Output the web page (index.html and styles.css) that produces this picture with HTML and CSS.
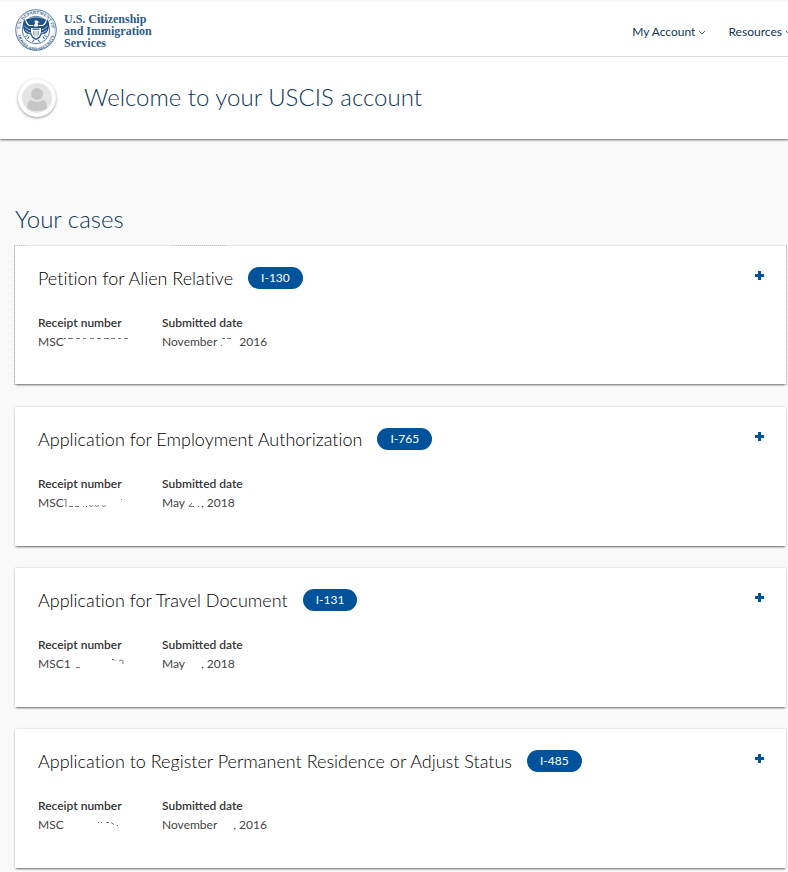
FILE: index.html
```html
<!DOCTYPE html>
<html lang="en">
<head>
    <meta charset="UTF-8">
    <meta name="viewport" content="width=device-width, initial-scale=1.0">
    <title>My Account | USCIS</title>
    <link rel="stylesheet" href="styles.css">
</head>
<body>
    <header class="topbar">
        <a class="brand" href="#">
            <svg class="seal" viewBox="0 0 84 84" aria-hidden="true">
                <defs>
                    <path id="seal-top" d="M11 50 A32 32 0 1 1 73 50"/>
                    <path id="seal-bottom" d="M5 46 A37 37 0 0 0 79 46"/>
                </defs>
                <circle cx="42" cy="42" r="40.500" fill="#fff" stroke="#51779d" stroke-width="2"/>
                <circle cx="42" cy="42" r="37.500" fill="none" stroke="#b9cadb" stroke-width="1"/>
                <circle cx="42" cy="42" r="27.500" fill="#f4f8fb" stroke="#5c80a4" stroke-width="2"/>
                <text class="seal-text"><textPath href="#seal-top" startOffset="50%" text-anchor="middle">U.S. DEPARTMENT OF</textPath></text>
                <text class="seal-text"><textPath href="#seal-bottom" startOffset="50%" text-anchor="middle">HOMELAND SECURITY</textPath></text>
                <path fill="#205387" d="M38 24 Q42 19 47 23 L51 25 L46 28 L48 34 L56 34 Q64 28 65 20 Q70 29 67 40 Q64 51 54 50 L49 58 L42 62 L35 58 L30 50 Q20 51 17 40 Q14 29 19 20 Q20 28 28 34 L36 34 L38 29 Z"/>
                <path fill="#205387" d="M27 20 Q42 13 57 20 L61 20 Q61 29 54 32 L30 32 Q23 29 23 20 Z"/>
                <path fill="#fff" d="M39 24 Q43 21 46 25 L49 26 L45 28 L47 34 Q42 37 37 34 L40 29 Z"/>
                <path fill="#fff" d="M32 38 H52 V45 Q51 55 42 59 Q33 55 32 45 Z"/>
                <path fill="#47719a" d="M35 39 H49 V42 H35 Z"/>
                <path fill="none" stroke="#6f90b0" stroke-width="1.500" d="M37 44 V52 M40 44 V55 M44 44 V55 M47 44 V52"/>
                <path fill="none" stroke="#e4edf5" stroke-width="1.500" d="M19 34 Q25 41 31 42 M20 42 Q26 47 32 48 M65 34 Q59 41 53 42 M64 42 Q58 47 52 48"/>
                <path fill="none" stroke="#205387" stroke-width="2" d="M25 52 L21 56 M28 55 L25 60 M59 52 L63 56 M56 55 L59 60 M38 61 L35 66 M46 61 L49 66"/>
            </svg>
            <span class="brand-name">U.S. Citizenship<br>and Immigration<br>Services</span>
        </a>
        <nav class="menu">
            <a href="#">My Account
                <svg class="chevron" viewBox="0 0 8 6" aria-hidden="true"><path d="M1 1 L4 4 L7 1"/></svg>
            </a>
            <a href="#">Resources
                <svg class="chevron" viewBox="0 0 8 6" aria-hidden="true"><path d="M1 1 L4 4 L7 1"/></svg>
            </a>
        </nav>
    </header>

    <section class="welcome">
        <div class="avatar">
            <svg viewBox="0 0 30 30" aria-hidden="true">
                <circle cx="15" cy="15" r="15" fill="#e4e4e4"/>
                <circle cx="15" cy="11" r="6" fill="#c6c6c6"/>
                <path fill="#c6c6c6" d="M5 25 Q5 18 9 17 Q15 21 21 17 Q25 18 25 25 Q21 28 15 28 Q9 28 5 25 Z"/>
            </svg>
        </div>
        <h1>Welcome to your USCIS account</h1>
    </section>

    <main class="cases">
        <h2>Your cases</h2>

        <article class="card card-focused">
            <div class="card-head">
                <h3>Petition for Alien Relative</h3>
                <span class="form-tag">I-130</span>
                <button class="expand" type="button" aria-label="Show details for I-130"></button>
            </div>
            <dl class="facts">
                <div>
                    <dt>Receipt number</dt>
                    <dd>MSC<svg class="hidden-number" viewBox="0 0 66 12" aria-hidden="true"><path d="M0 2.500 h2 M4 2.500 h5 M12 2.500 h4 M19 2.500 h3 M26 2.500 h4 M33 2.500 h4 M40 2.500 h5 M47 2.500 h4 M54 2.500 h3 M60 2.500 h4"/></svg></dd>
                </div>
                <div>
                    <dt>Submitted date</dt>
                    <dd>November<svg class="hidden-day" viewBox="0 0 22 12" aria-hidden="true"><path d="M5 2.500 h3 M10 2.500 h4 M4 9.500 h1"/></svg>2016</dd>
                </div>
            </dl>
        </article>

        <article class="card">
            <div class="card-head">
                <h3>Application for Employment Authorization</h3>
                <span class="form-tag">I-765</span>
                <button class="expand" type="button" aria-label="Show details for I-765"></button>
            </div>
            <dl class="facts">
                <div>
                    <dt>Receipt number</dt>
                    <dd>MSC<svg class="hidden-number" viewBox="0 0 66 12" aria-hidden="true"><path d="M0 3 L2 2 V10 M5 9.500 h4 M11 9.500 h4 M19 9.500 h1 M22 9.500 h1 M25 8.500 q2 2 4 0 M31 8.500 q2 2 4 0 M38 8.500 q2 2 4 0 M57 2.500 h1"/></svg></dd>
                </div>
                <div>
                    <dt>Submitted date</dt>
                    <dd>May<svg class="hidden-day-short" viewBox="0 0 16 12" aria-hidden="true"><path d="M7 6 L4 9.500 H9 M13 9.500 h1"/></svg>, 2018</dd>
                </div>
            </dl>
        </article>

        <article class="card">
            <div class="card-head">
                <h3>Application for Travel Document</h3>
                <span class="form-tag">I-131</span>
                <button class="expand" type="button" aria-label="Show details for I-131"></button>
            </div>
            <dl class="facts">
                <div>
                    <dt>Receipt number</dt>
                    <dd>MSC1<svg class="hidden-number" viewBox="0 0 66 12" aria-hidden="true"><path d="M5 9.500 h4 M41 1.500 h2 l1 1 M48 3 q2 -2 4 0 v3"/></svg></dd>
                </div>
                <div>
                    <dt>Submitted date</dt>
                    <dd>May<svg class="hidden-day-short" viewBox="0 0 16 12" aria-hidden="true"></svg>, 2018</dd>
                </div>
            </dl>
        </article>

        <article class="card">
            <div class="card-head">
                <h3>Application to Register Permanent Residence or Adjust Status</h3>
                <span class="form-tag">I-485</span>
                <button class="expand" type="button" aria-label="Show details for I-485"></button>
            </div>
            <dl class="facts">
                <div>
                    <dt>Receipt number</dt>
                    <dd>MSC<svg class="hidden-number" viewBox="0 0 66 12" aria-hidden="true"><path d="M34 3.500 h1 M37 3.500 h1 M42 3.500 h3 M47 3.500 l3 2 M53 6.500 h1"/></svg></dd>
                </div>
                <div>
                    <dt>Submitted date</dt>
                    <dd>November<svg class="hidden-day-short" viewBox="0 0 16 12" aria-hidden="true"></svg>, 2016</dd>
                </div>
            </dl>
        </article>
    </main>
</body>
</html>
```
FILE: styles.css
```css
* {
    box-sizing: border-box;
}
body {
    margin: 0;
    background: #f9f9f9;
    color: #333;
    font-family: Lato, "Open Sans", sans-serif;
    font-size: 12px;
}
h1, h2, h3, dl, dd {
    margin: 0;
}

/* Top bar */
.topbar {
    display: flex;
    align-items: center;
    justify-content: space-between;
    height: 57px;
    padding-left: 15px;
    overflow: hidden;
    background: #fff;
    border-top: 2px solid #f8f8f8;
    border-bottom: 1px solid #e6e6e6;
}
.brand {
    display: flex;
    align-items: center;
    gap: 7px;
    color: #2d5c8a;
    text-decoration: none;
}
.seal {
    width: 42px;
    height: 42px;
    margin-top: 2px;
}
.seal-text {
    fill: #3f698f;
    font-family: "Liberation Serif", serif;
    font-size: 9px;
    font-weight: bold;
}
.brand-name {
    margin-top: 4px;
    font-family: "Liberation Serif", serif;
    font-size: 12px;
    font-weight: bold;
    line-height: 12px;
}
.menu {
    display: flex;
    gap: 22px;
    margin-top: 6px;
    margin-right: -5px;
}
.menu a {
    color: #0f3557;
    font-size: 12px;
    line-height: 16px;
    text-decoration: none;
    white-space: nowrap;
}
.chevron {
    width: 8px;
    height: 6px;
    fill: none;
    stroke: #4a6a86;
}

/* Welcome band */
.welcome {
    position: relative;
    display: flex;
    align-items: center;
    gap: 28px;
    padding: 22px 18px;
    background: #fff;
    box-shadow: 0 1px 2px rgba(0, 0, 0, 0.6);
}
.avatar {
    width: 38px;
    height: 38px;
    padding: 4px;
    border-radius: 50%;
    background: #fff;
    box-shadow: 0 1px 3px rgba(0, 0, 0, 0.4);
}
.avatar svg {
    display: block;
}
h1, h2 {
    color: #0f3557;
    font-size: 24px;
    font-weight: 300;
    line-height: 30px;
}
h1 {
    padding-bottom: 2px;
}

/* Case list */
.cases {
    padding: 65px 2px 3px 15px;
}
h2 {
    margin-bottom: 12px;
}
.card {
    position: relative;
    padding: 21px 20px 34px 23px;
    margin-bottom: 22px;
    background: #fff;
    box-shadow: 0 2px 2px -1px rgba(0, 0, 0, 0.55), 0 0 2px rgba(0, 0, 0, 0.2);
}
.card-focused {
    padding-bottom: 33px;
    margin-bottom: 23px;
}
.card-focused::before {
    content: "";
    position: absolute;
    inset: -1px;
    border-right: 1px dotted #b5b5b5;
    border-left: 1px dotted #b5b5b5;
    background:
        repeating-linear-gradient(90deg, #c4c4c4 0 1px, transparent 1px 2px) 157px 0 / 56px 1px no-repeat,
        repeating-linear-gradient(90deg, #c4c4c4 0 1px, transparent 1px 2px) 2px 0 / 10px 1px no-repeat;
    pointer-events: none;
}
.card-head {
    display: flex;
    align-items: center;
}
h3 {
    color: #000;
    font-size: 18px;
    font-weight: 300;
    font-variant-ligatures: none;
    line-height: 22px;
}
.form-tag {
    margin-left: 15px;
    padding: 0 13px;
    border-radius: 11px;
    background: #00539b;
    color: #fff;
    font-size: 12px;
    line-height: 22px;
    white-space: nowrap;
}
.expand {
    align-self: flex-start;
    width: 13px;
    height: 17px;
    margin-left: auto;
    padding: 0;
    border: 0;
    background:
        linear-gradient(#00539b, #00539b) center / 9px 3px no-repeat,
        linear-gradient(#00539b, #00539b) center / 3px 9px no-repeat;
    cursor: pointer;
}
.facts {
    display: flex;
    margin-top: 24px;
}
.facts > div {
    width: 124px;
    white-space: nowrap;
}
.facts dt,
.facts dd {
    font-size: 12px;
    line-height: 19px;
}
.facts dt {
    font-weight: 600;
}
.facts dd {
    color: #444;
}

/* Masked digits */
.hidden-number,
.hidden-day,
.hidden-day-short {
    height: 12px;
    vertical-align: -2px;
    fill: none;
    stroke: #777;
}
.hidden-number {
    width: 66px;
}
.hidden-day {
    width: 22px;
}
.hidden-day-short {
    width: 16px;
}
```
